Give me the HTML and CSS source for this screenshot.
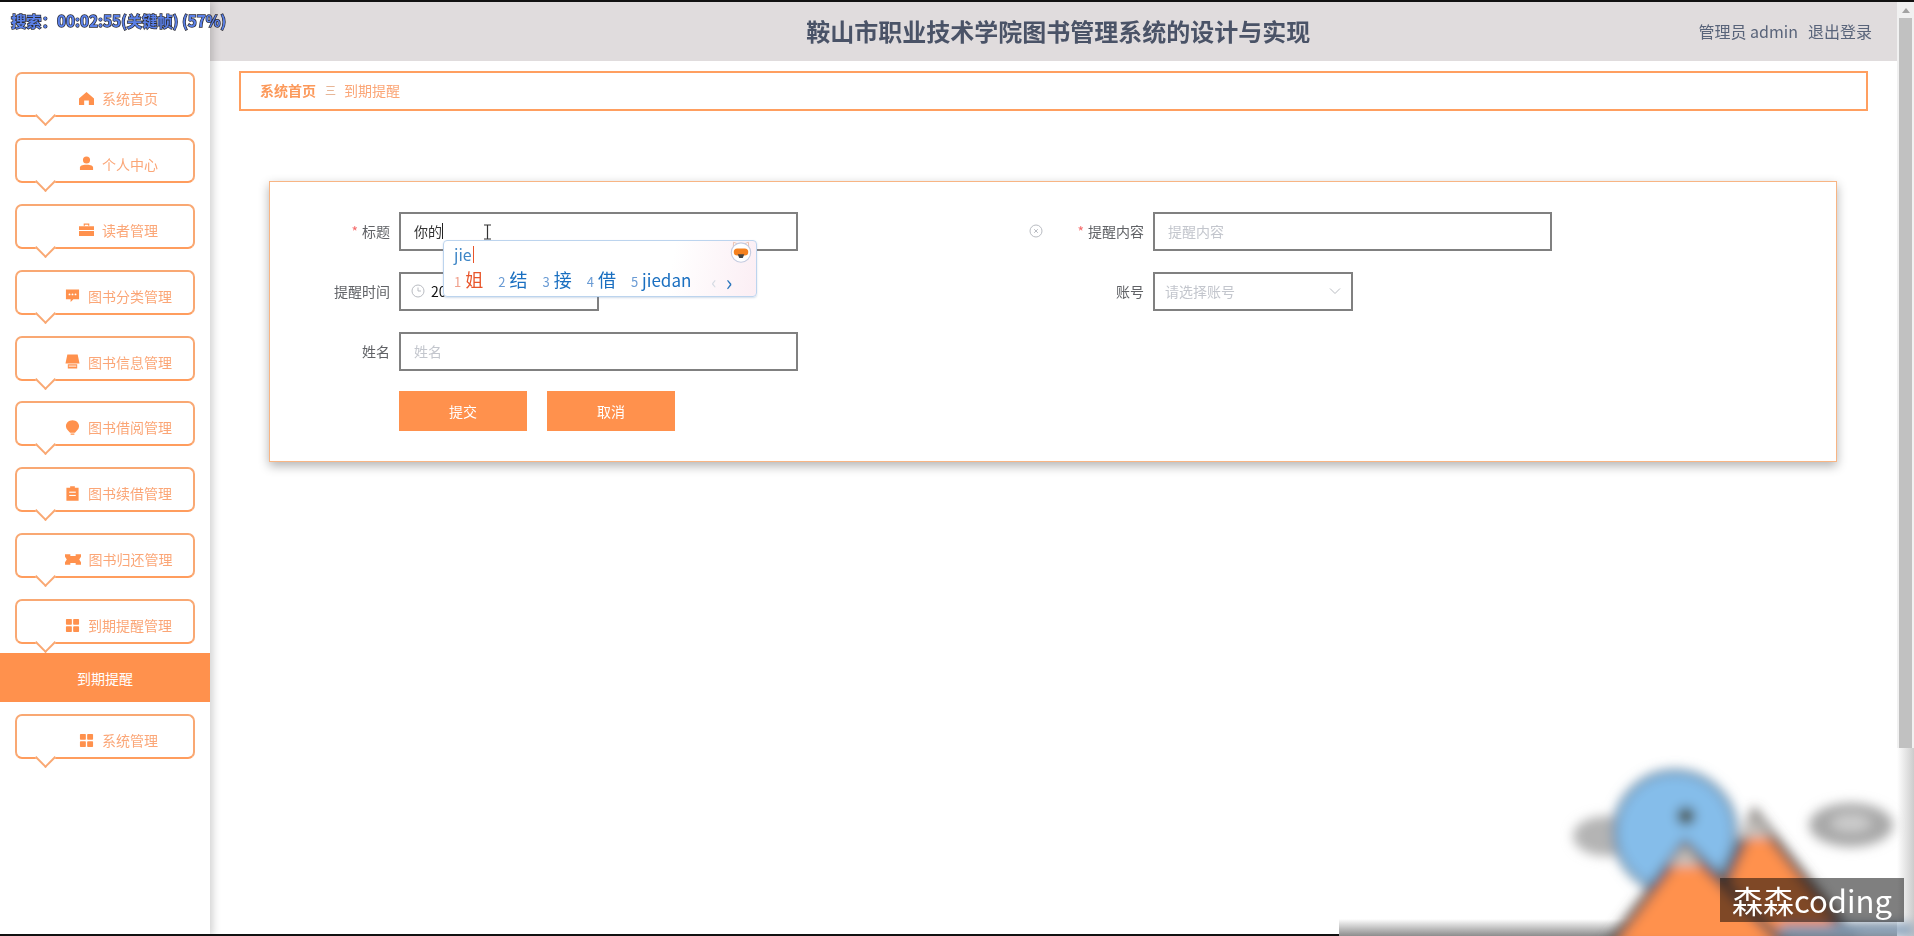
FILE: index.html
```html
<!DOCTYPE html>
<html lang="zh-CN">
<head>
  <meta charset="UTF-8" />
  <meta name="viewport" content="width=device-width, initial-scale=1.0" />
  <title>到期提醒</title>
  <link rel="stylesheet" href="styles.css">
</head>
<body>
  <div class="screen">
    <div class="topline"></div>
    <div class="app">
      <aside class="sidebar">
        <div class="menu">
          <a class="menu-item"><svg class="ico" viewBox="0 0 16 16"><path d="M8 1 L16 8 V15 H10.5 V10 H5.5 V15 H0 V8 Z"/></svg>系统首页</a>
          <a class="menu-item"><svg class="ico" viewBox="0 0 16 16"><circle cx="8" cy="4.2" r="3.8"/><path d="M1 15 V12.5 C1 10.3 3 9.3 8 9.3 C13 9.3 15 10.3 15 12.5 V15 Z"/></svg>个人中心</a>
          <a class="menu-item"><svg class="ico" viewBox="0 0 16 16"><path d="M5 4 V1.5 H11 V4 H9.7 V2.8 H6.3 V4 Z M0 4.6 H16 V8.6 H0 Z M0 9.6 H16 V15 H0 Z"/></svg>读者管理</a>
          <a class="menu-item"><svg class="ico" viewBox="0 0 16 16"><path d="M1 1.5 H15 V12 H9 L6 15 V12 H1 Z"/><g fill="#fff"><circle cx="4.8" cy="6.8" r="1"/><circle cx="8" cy="6.8" r="1"/><circle cx="11.2" cy="6.8" r="1"/></g></svg>图书分类管理</a>
          <a class="menu-item"><svg class="ico" viewBox="0 0 16 16"><path d="M2.5 0.5 H13.5 L15.5 10 H0.5 Z M3 11 H13 V15.5 H3 Z"/><rect x="4" y="12.4" width="8" height="1" fill="#fff"/></svg>图书信息管理</a>
          <a class="menu-item"><svg class="ico" viewBox="0 0 16 16"><path d="M8 0.2 C12.2 0.2 15 3.2 15 6.6 C15 9.6 12.4 11.4 10.6 13.6 H5.4 C3.6 11.4 1 9.6 1 6.6 C1 3.2 3.8 0.2 8 0.2 Z M6 14.3 H10 V15.8 H6 Z"/></svg>图书借阅管理</a>
          <a class="menu-item"><svg class="ico" viewBox="0 0 16 16"><path d="M5.5 0.2 H10.5 V1.8 H14.5 V15.8 H1.5 V1.8 H5.5 Z"/><g fill="#fff"><rect x="4.5" y="6" width="7" height="1.2"/><rect x="4.5" y="9.5" width="7" height="1.2"/></g></svg>图书续借管理</a>
          <a class="menu-item"><svg class="ico ico-wide" viewBox="0 0 18 16"><path d="M0 2 H6 V4 H12 V2 H18 V5 L16 8 L18 11 V14 H12 V12 H6 V14 H0 V11 L2 8 L0 5 Z"/></svg>图书归还管理</a>
          <a class="menu-item"><svg class="ico" viewBox="0 0 16 16"><rect x="1" y="1" width="6.3" height="6.3" rx="0.8"/><rect x="8.7" y="1" width="6.3" height="6.3" rx="0.8"/><rect x="1" y="8.7" width="6.3" height="6.3" rx="0.8"/><rect x="8.7" y="8.7" width="6.3" height="6.3" rx="0.8"/></svg>到期提醒管理</a>
          <a class="submenu-item">到期提醒</a>
          <a class="menu-item"><svg class="ico" viewBox="0 0 16 16"><rect x="1" y="1" width="6.3" height="6.3" rx="0.8"/><rect x="8.7" y="1" width="6.3" height="6.3" rx="0.8"/><rect x="1" y="8.7" width="6.3" height="6.3" rx="0.8"/><rect x="8.7" y="8.7" width="6.3" height="6.3" rx="0.8"/></svg>系统管理</a>
        </div>
      </aside>

      <main class="main">
        <header class="header">
          <div class="site-title">鞍山市职业技术学院图书管理系统的设计与实现</div>
          <div class="user"><span>管理员 admin</span><span>退出登录</span></div>
        </header>

        <nav class="crumbs">
          <b>系统首页</b><i>三</i><span>到期提醒</span>
        </nav>

        <section class="card">
          <div class="form-grid">
            <div class="row">
              <label class="lab"><em>*</em>标题</label>
              <div class="field wide filled">你的<span class="caret"></span></div>
            </div>
            <div class="row">
              <label class="lab">
                <svg class="clear" viewBox="0 0 14 14"><circle cx="7" cy="7" r="6" /><path d="M5.2 5.2 L8.8 8.8 M8.8 5.2 L5.2 8.8"/></svg>
                <em>*</em>提醒内容
              </label>
              <div class="field wide hint">提醒内容</div>
            </div>
            <div class="row">
              <label class="lab">提醒时间</label>
              <div class="field short filled date">
                <svg class="clock" viewBox="0 0 14 14"><circle cx="7" cy="7" r="6"/><path d="M7 3.5 V7 H10"/></svg>20
              </div>
            </div>
            <div class="row">
              <label class="lab">账号</label>
              <div class="field short hint select">请选择账号
                <svg class="chev" viewBox="0 0 12 8"><path d="M1 1.5 L6 6.5 L11 1.5"/></svg>
              </div>
            </div>
            <div class="row">
              <label class="lab">姓名</label>
              <div class="field wide hint">姓名</div>
            </div>
          </div>
          <div class="actions">
            <button class="btn">提交</button>
            <button class="btn">取消</button>
          </div>
        </section>
      </main>

      <div class="scrollbar">
        <div class="scroll-up"></div>
        <div class="scroll-thumb"></div>
      </div>
    </div>

    <!-- things that lie over the page -->
    <div class="ime">
      <div class="ime-input">jie<span class="ime-caret"></span></div>
      <svg class="ime-logo" viewBox="0 0 20 20">
        <path d="M3 7 L3.2 1.2 L7 2.6 H13 L16.8 1.2 L17 7 Z" fill="#fff" stroke="#e9b9a6" stroke-width="0.8"/>
        <circle cx="10" cy="10.5" r="8.8" fill="#fff" stroke="#c4cbe0" stroke-width="1"/>
        <rect x="3.4" y="6.8" width="13.2" height="6.4" rx="3.2" fill="#f5811f"/>
        <path d="M7 12 H13 L11.6 15.5 H8.4 Z" fill="#444"/>
      </svg>
      <div class="ime-list">
        <span class="cand first"><small>1</small>姐</span>
        <span class="cand"><small>2</small>结</span>
        <span class="cand"><small>3</small>接</span>
        <span class="cand"><small>4</small>借</span>
        <span class="cand"><small>5</small><span class="latin">jiedan</span></span>
        <span class="ime-prev">‹</span>
        <span class="ime-next">›</span>
      </div>
    </div>

    <svg class="ibeam" viewBox="0 0 9 16"><path d="M1 1 H8 M4.5 1 V15 M1 15 H8"/></svg>

    <div class="hud">搜索：00:02:55(关键帧) (57%)</div>

    <div class="bottom-fade"></div>
    <div class="right-fade"></div>
    <div class="blackbar"></div>

    <svg class="mascot" viewBox="1540 750 374 186">
      <defs><filter id="soft"><feGaussianBlur stdDeviation="6"/></filter></defs>
      <g filter="url(#soft)">
        <ellipse cx="1607" cy="836" rx="34" ry="20" fill="#b4b4b4"/>
        <ellipse cx="1851" cy="825" rx="42" ry="22" fill="#a8a8a8"/>
        <ellipse cx="1851" cy="823" rx="20" ry="9" fill="#ccc"/>
        <circle cx="1675" cy="832" r="60" fill="#85bdea" stroke="#6f90ab" stroke-width="6"/>
        <circle cx="1686" cy="816" r="9" fill="#4a4f3c"/>
        <path d="M1755 815 L1850 936 H1700 Z" fill="#ff914d" stroke="#5f5a56" stroke-width="9"/>
        <path d="M1755 815 L1738 838 H1772 Z" fill="#c4c0bc"/>
        <path d="M1685 845 L1790 950 H1606 Z" fill="#ff914d" stroke="#5f5a56" stroke-width="9"/>
        <path d="M1685 845 L1668 866 H1702 Z" fill="#c4c0bc"/>
        <rect x="1780" y="924" width="134" height="12" fill="#7f9ab5"/>
      </g>
    </svg>

    <div class="watermark">森森coding</div>
  </div>
</body>
</html>
```

FILE: styles.css
```css
* {
  box-sizing: border-box;
}
body {
  margin: 0;
  font-family: "Noto Sans CJK SC", "Noto Sans", sans-serif;
  background: #fff;
  color: #606266;
}
.screen {
  position: relative;
  height: 936px;
  overflow: hidden;
  display: flex;
  flex-direction: column;
}
.topline {
  height: 2px;
  background: #111;
  flex: none;
}
.app {
  flex: 1;
  display: flex;
  min-height: 0;
  filter: blur(0.35px);
}

/* sidebar */
.sidebar {
  width: 210px;
  flex: none;
  background: #fff;
  box-shadow: 3px 0 8px rgba(0, 0, 0, 0.18);
  position: relative;
  z-index: 1;
}
.menu {
  padding-top: 70px;
  display: flex;
  flex-direction: column;
}
.menu-item {
  position: relative;
  height: 45px;
  width: 180px;
  margin: 0 0 20.9px 15px;
  padding: 7px 0 0 27px;
  border: 2px solid #f9a873;
  border-bottom-color: #ff9d5e;
  border-radius: 7px;
  background: #fff;
  display: flex;
  align-items: center;
  justify-content: center;
  gap: 8px;
  font-size: 14px;
  color: #fba677;
}
.menu-item::after {
  content: "";
  position: absolute;
  left: 21px;
  bottom: -8px;
  width: 13px;
  height: 13px;
  background: #fff;
  border-right: 2px solid #f9a873;
  border-bottom: 2px solid #f9a873;
  transform: rotate(45deg);
}
.ico {
  width: 15px;
  height: 15px;
  fill: #ff914d;
  flex: none;
}
.ico-wide {
  width: 16px;
}
.submenu-item {
  height: 49px;
  margin: -12px 0 12px;
  background: #ff914d;
  color: #fff;
  font-size: 14px;
  display: flex;
  align-items: center;
  justify-content: center;
  position: relative;
}

/* main */
.main {
  flex: 1;
  min-width: 0;
}
.header {
  height: 59px;
  background: #e0dcdd;
  display: flex;
  align-items: center;
  padding: 0 25px 2px 208px;
}
.site-title {
  flex: 1;
  text-align: center;
  font-size: 24px;
  font-weight: 700;
  color: #4a5367;
}
.user {
  display: flex;
  gap: 10px;
  font-size: 16px;
  color: #59647a;
}
.crumbs {
  height: 40px;
  margin: 10px 29px 0;
  border: 2px solid #ff9f60;
  padding: 0 19px 2px;
  display: flex;
  align-items: center;
  font-size: 14px;
  color: #fba677;
}
.crumbs b {
  color: #fc995a;
  font-weight: 700;
}
.crumbs i {
  font-style: normal;
  font-size: 11px;
  margin: 0 8px 0 9px;
  color: #e0a27a;
}
.card {
  margin: 70px 60px 0 59px;
  height: 281px;
  padding: 30px 0;
  border: 1px solid #f8b584;
  background: #fff;
  box-shadow: 0 4px 10px rgba(0, 0, 0, 0.3);
}
.form-grid {
  display: grid;
  grid-template-columns: 754px 1fr;
  row-gap: 21px;
}
.row {
  display: flex;
  align-items: center;
  gap: 9px;
}
.lab {
  width: 120px;
  flex: none;
  display: flex;
  justify-content: flex-end;
  align-items: center;
  padding-bottom: 2px;
  font-size: 14px;
  color: #606266;
}
.lab em {
  font-style: normal;
  color: #f56c6c;
  margin-right: 4px;
}
.clear {
  width: 14px;
  height: 14px;
  margin: 0 auto 0 5px;
  fill: none;
  stroke: #b9bcc2;
}
.field {
  height: 39px;
  border: 2px solid #808080;
  background: #fff;
  display: flex;
  align-items: center;
  padding: 0 13px 2px;
  font-size: 14px;
}
.wide {
  width: 399px;
}
.short {
  width: 200px;
}
.filled {
  color: #333;
}
.hint {
  color: #c3c6cd;
}
.caret {
  width: 1px;
  height: 16px;
  background: #222;
}
.date {
  gap: 6px;
  padding-left: 10px;
  color: #111;
}
.clock {
  width: 14px;
  height: 14px;
  fill: none;
  stroke: #b9bcc2;
}
.select {
  justify-content: space-between;
  padding: 0 10px 2px 10px;
}
.chev {
  width: 12px;
  height: 8px;
  fill: none;
  stroke: #b9bcc2;
}
.actions {
  margin: 20px 0 0 129px;
  display: flex;
  gap: 20px;
}
.btn {
  width: 128px;
  height: 40px;
  border: none;
  background: #ff914d;
  color: #fff;
  font: inherit;
  font-size: 14px;
}

/* fake scrollbar of the browser window */
.scrollbar {
  width: 17px;
  flex: none;
  background: #f1f1f1;
  padding: 16px 2px 0;
  position: relative;
}
.scroll-up {
  position: absolute;
  top: 6px;
  left: 5px;
  border: 4px solid transparent;
  border-top: none;
  border-bottom: 5px solid #a3a3a3;
}
.scroll-thumb {
  height: 730px;
  background: #c1c1c1;
}

/* input method popup */
.ime {
  position: absolute;
  left: 443px;
  top: 240px;
  width: 314px;
  height: 57px;
  padding: 1px 10px 0;
  background: linear-gradient(100deg, #fff 72%, #fbeef4 100%);
  border: 1px solid #bcd4ee;
  border-radius: 4px;
  box-shadow: 0 1px 2px rgba(80, 120, 170, 0.25);
  z-index: 3;
}
.ime-input {
  font-size: 16px;
  line-height: 24px;
  color: #3e86c6;
  display: flex;
  align-items: center;
}
.ime-caret {
  width: 1px;
  height: 17px;
  margin-left: 1px;
  background: #e8552b;
}
.ime-logo {
  position: absolute;
  right: 4px;
  top: 0;
  width: 22px;
  height: 22px;
}
.ime-list {
  display: flex;
  align-items: center;
  gap: 15px;
  font-size: 18px;
  line-height: 26px;
  color: #1a6fc0;
}
.cand small {
  font-size: 13px;
  color: #6a9bd4;
  margin-right: 4px;
}
.cand.first {
  color: #e8552b;
}
.cand.first small {
  color: #f0a08c;
}
.latin {
  font-size: 17px;
}
.ime-prev {
  margin-left: 5px;
  color: #d5dbe3;
}
.ime-next {
  margin-left: -6px;
  font-size: 22px;
  line-height: 22px;
  color: #2a76bd;
}
.ibeam {
  position: absolute;
  left: 483px;
  top: 224px;
  width: 9px;
  height: 16px;
  fill: none;
  stroke: #333;
  stroke-width: 1.2;
  z-index: 4;
}

/* video player leftovers */
.hud {
  position: absolute;
  left: 11px;
  top: 9px;
  font-size: 15.3px;
  font-weight: 700;
  color: #5a80e8;
  -webkit-text-stroke: 1.4px #2b2b33;
  paint-order: stroke fill;
  z-index: 5;
}
.bottom-fade {
  position: absolute;
  left: 1339px;
  right: 0;
  bottom: 0;
  height: 17px;
  background: linear-gradient(#fff, #8d8d8d);
  z-index: 5;
}
.right-fade {
  position: absolute;
  right: 0;
  top: 748px;
  bottom: 0;
  width: 17px;
  background: linear-gradient(90deg, #fff, #ccc);
  z-index: 5;
}
.blackbar {
  position: absolute;
  left: 0;
  bottom: 0;
  width: 1339px;
  height: 2px;
  background: #111;
  z-index: 5;
}
.mascot {
  position: absolute;
  left: 1540px;
  top: 750px;
  width: 374px;
  height: 186px;
  z-index: 6;
}
.watermark {
  position: absolute;
  left: 1720px;
  top: 878px;
  width: 184px;
  height: 44px;
  background: rgba(0, 0, 0, 0.5);
  color: #fff;
  font-size: 31px;
  line-height: 44px;
  text-align: center;
  white-space: nowrap;
  z-index: 7;
}
```
